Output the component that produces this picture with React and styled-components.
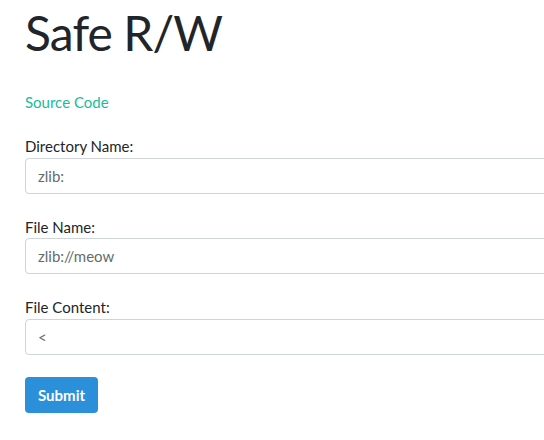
import React from "react";
import styled, { createGlobalStyle } from "styled-components";

const Global = createGlobalStyle`
  html, body {
    margin: 0;
    padding: 0;
    overflow: hidden;
    background: #ffffff;
  }
  body {
    font-family: Lato, "Open Sans", sans-serif;
    font-size: 15px;
    line-height: 1.5;
    color: #212529;
  }
`;

const Page = styled.div`
  padding: 0 0 0 25px;
  width: 700px;
`;

const Title = styled.h1`
  margin: 4px 0 0;
  font-size: 48px;
  line-height: 1.2;
  font-weight: 400;
  letter-spacing: -0.9px;
  color: #212529;
`;

const Links = styled.p`
  margin: 29.5px 0 21.5px;
`;

const SourceLink = styled.a`
  color: #18bc9c;
  text-decoration: none;
`;

const Form = styled.form`
  display: flex;
  flex-direction: column;
  align-items: flex-start;
`;

const Group = styled.div`
  display: flex;
  flex-direction: column;
  width: 100%;
  margin-bottom: 22px;
`;

const Label = styled.label`
  display: block;
  line-height: 22.5px;
`;

const Input = styled.input`
  box-sizing: border-box;
  width: 100%;
  height: 36px;
  padding: 6px 12px;
  border: 1px solid #ced4da;
  border-radius: 4px;
  font-family: Lato, "Open Sans", sans-serif;
  font-size: 15px;
  line-height: 22.5px;
  color: #5f6d6e;
  background: #fff;
  outline: none;
`;

const Button = styled.button`
  height: 36px;
  padding: 0 13px;
  border: none;
  border-radius: 4px;
  background: #2c8fd9;
  color: #ffffff;
  font-family: Lato, "Open Sans", sans-serif;
  font-size: 15px;
  font-weight: 700;
  cursor: pointer;
`;

const fields = [
  { id: "dir", label: "Directory Name:", value: "zlib:" },
  { id: "file", label: "File Name:", value: "zlib://meow" },
  { id: "content", label: "File Content:", value: "<" },
];

export default function App() {
  return (
    <>
      <Global />
      <Page>
        <Title>Safe R/W</Title>
        <Links>
          <SourceLink href="#">Source Code</SourceLink>
        </Links>
        <Form onSubmit={(e) => e.preventDefault()}>
          {fields.map((f) => (
            <Group key={f.id}>
              <Label htmlFor={f.id}>{f.label}</Label>
              <Input id={f.id} defaultValue={f.value} />
            </Group>
          ))}
          <Button type="submit">Submit</Button>
        </Form>
      </Page>
    </>
  );
}
